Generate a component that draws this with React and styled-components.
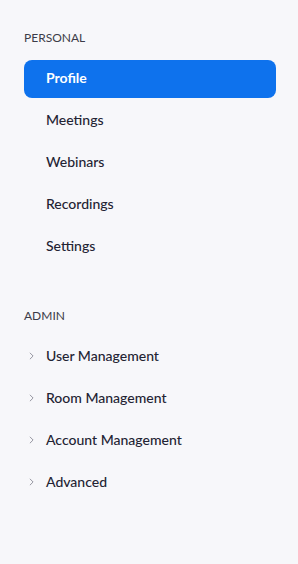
import React, { useState } from "react";
import styled, { createGlobalStyle } from "styled-components";

const GlobalStyle = createGlobalStyle`
  html, body {
    margin: 0;
    padding: 0;
    background: #f7f7fa;
  }
  body {
    font-family: Lato, "Noto Sans", sans-serif;
  }
`;

const personal = ["Profile", "Meetings", "Webinars", "Recordings", "Settings"];
const admin = ["User Management", "Room Management", "Account Management", "Advanced"];

export default function App() {
  const [active, setActive] = useState("Profile");

  return (
    <>
      <GlobalStyle />
      <Sidebar>
        <Section>
          <Label>Personal</Label>
          <List>
            {personal.map((item) => (
              <Item
                key={item}
                $active={active === item}
                onClick={() => setActive(item)}
              >
                {item}
              </Item>
            ))}
          </List>
        </Section>

        <Section>
          <Label>Admin</Label>
          <List>
            {admin.map((item) => (
              <Item key={item}>
                <Chevron viewBox="0 0 6 10">
                  <path d="M1 1l4 4-4 4" />
                </Chevron>
                {item}
              </Item>
            ))}
          </List>
        </Section>
      </Sidebar>
    </>
  );
}

const Sidebar = styled.nav`
  width: 298px;
  min-height: 564px;
  box-sizing: border-box;
  padding: 30px 22px 0 24px;
  display: flex;
  flex-direction: column;
  gap: 42px;
`;

const Section = styled.div`
  display: flex;
  flex-direction: column;
`;

const Label = styled.div`
  font-size: 12px;
  line-height: 16px;
  text-transform: uppercase;
  color: #3c3c48;
  margin-bottom: 14px;
`;

const List = styled.div`
  display: flex;
  flex-direction: column;
  gap: 4px;
`;

const Item = styled.div`
  position: relative;
  height: 38px;
  box-sizing: border-box;
  border-radius: 8px;
  display: flex;
  align-items: center;
  padding: 0 0 3px 22px;
  font-size: 14px;
  font-weight: ${(p) => (p.$active ? 700 : 500)};
  color: ${(p) => (p.$active ? "#ffffff" : "#232333")};
  background: ${(p) => (p.$active ? "#0e72ed" : "transparent")};
  cursor: pointer;
`;

const Chevron = styled.svg`
  position: absolute;
  left: 5px;
  top: 14px;
  width: 5px;
  height: 8px;
  fill: none;
  stroke: #8a8a96;
  stroke-width: 1.1;
`;
